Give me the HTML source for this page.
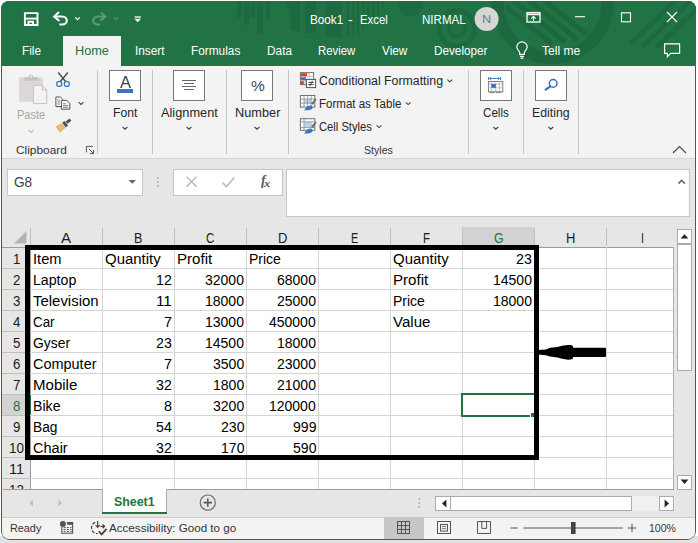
<!DOCTYPE html>
<html lang="en"><head><meta charset="utf-8"><title>Book1 - Excel</title>
<style>
html,body{margin:0;padding:0;}
body{width:698px;height:543px;overflow:hidden;background:#fff;position:relative;font-family:"Liberation Sans",sans-serif;}
.win{position:absolute;left:1px;top:1px;width:695px;height:539px;background:#217346;border-radius:8px 8px 9px 9px;overflow:hidden;}
.win *{position:absolute;}
.shadow{position:absolute;left:0;top:536px;width:698px;height:7px;background:#e2e2e2;}
.titlebg{left:0;top:0;width:695px;height:65px;background:#217346;}
.hometab{left:62px;top:35px;width:58px;height:30px;background:#f3f3f3;}
.ribbon{left:1px;top:65px;width:693px;height:92px;background:#f3f3f3;}
.below{left:1px;top:157px;width:693px;height:359px;background:#e6e6e6;}
.rline{left:1px;top:157px;width:693px;height:1px;background:#d4d4d4;}
.sep{width:1px;background:#c6c6c6;top:69px;height:84px;}
.bigbtn{width:30px;height:29px;top:69px;background:#fff;border:1px solid #787878;}
.box{background:#fff;border:1px solid #c6c6c6;box-sizing:border-box;}
.status{left:1px;top:516px;width:693px;height:22px;background:#f3f3f3;border-radius:0 0 7px 7px;border-top:1px solid #cdcdcd;box-sizing:border-box;}
.gridbg{left:30px;top:247px;width:643px;height:241px;background:#fff;}
.grid{position:absolute;left:0;top:0;width:698px;height:543px;overflow:hidden;pointer-events:none;}
.grid i{position:absolute;display:block;}
.vl{top:247px;width:1px;height:242px;background:#d4d4d4;}
.hl{left:30px;width:643px;height:1px;background:#d4d4d4;}
.hvl{top:228px;width:1px;height:18px;background:#c0c0c0;}
.hhl{left:2px;width:28px;height:1px;background:#c0c0c0;}
.texts{position:absolute;left:0;top:0;width:698px;height:543px;overflow:hidden;}
.t{position:absolute;white-space:pre;line-height:20px;height:20px;transform-origin:0 50%;display:block;}
svg{position:absolute;overflow:visible;}
.ov{position:absolute;}
</style></head><body>
<div class="shadow"></div>
<div class="win">
 <div class="titlebg"></div>
 <svg style="left:0;top:0" width="695" height="65" viewBox="1 1 695 65"><defs><clipPath id="ringclip"><circle cx="552.5" cy="3" r="47"/></clipPath></defs>
  <g fill="#1e6a40" stroke="none">
   <rect x="237" y="0" width="5" height="18"/><rect x="244" y="0" width="5" height="25"/><rect x="250.6" y="0" width="5" height="18"/>
   <rect x="257" y="0" width="6" height="33"/><rect x="266" y="0" width="4" height="20"/>
   <path d="M285 0 L290 12 L290 30 L300 33 L300 0 Z"/>
   <rect x="305" y="0" width="11" height="33"/>
   <rect x="325.5" y="0" width="16.5" height="37"/>
   <rect x="347" y="0" width="2.4" height="36"/><rect x="352" y="0" width="2.4" height="35"/><rect x="357" y="0" width="2.4" height="33"/><rect x="362" y="0" width="2.4" height="30"/><rect x="367" y="0" width="2.4" height="26"/><rect x="372" y="0" width="2" height="20"/><rect x="377" y="0" width="2" height="14"/><rect x="382" y="0" width="2" height="8"/>
   <circle cx="410.7" cy="4" r="12"/>
  </g>
  <g fill="none" stroke="#1e6a40">
   <circle cx="456.8" cy="28.4" r="8" stroke-width="4"/>
   <circle cx="456.8" cy="28.4" r="17.7" stroke-width="5"/>
   <circle cx="552.5" cy="3" r="55" stroke-width="12" stroke="#1d683e"/>
   <g clip-path="url(#ringclip)" stroke="#1d683e"><path d="M490 -6 L552 44 M503 -8 L565 42 M516 -10 L578 40 M529 -12 L591 38" stroke-width="5"/></g>
   <path d="M630 44 L676 0 M643 46 L691 0 M656 48 L704 2" stroke-width="5"/>
  </g>
 </svg>
 <div class="hometab"></div>
 <div class="ribbon"></div>
 <div class="below"></div>
 <div class="rline"></div>
 <!-- ribbon separators -->
 <div class="sep" style="left:96px"></div>
 <div class="sep" style="left:151px"></div>
 <div class="sep" style="left:225px"></div>
 <div class="sep" style="left:287px"></div>
 <div class="sep" style="left:467px"></div>
 <div class="sep" style="left:522px"></div>
 <div class="sep" style="left:577px"></div>
 <!-- big buttons -->
 <div class="bigbtn" style="left:108px"></div>
 <div class="bigbtn" style="left:172px"></div>
 <div class="bigbtn" style="left:240px"></div>
 <div class="bigbtn" style="left:479px"></div>
 <div class="bigbtn" style="left:534px"></div>
 <!-- formula bar -->
 <div class="box" style="left:6px;top:168px;width:136px;height:27px"></div>
 <div class="box" style="left:172px;top:168px;width:110px;height:27px"></div>
 <div class="box" style="left:285px;top:168px;width:404px;height:48px"></div>
 <!-- grid background + header area -->
 <div style="left:2px;top:225px;width:672px;height:22px;background:#e6e6e6"></div>
 <div style="left:461px;top:226px;width:72px;height:20px;background:#d2d2d2"></div>
 <div style="left:461px;top:245px;width:72px;height:2px;background:#217346"></div>
 <div style="left:1px;top:394px;width:28px;height:20px;background:#d2d2d2"></div>
  <div class="gridbg"></div>
 <div style="left:1px;top:246px;width:672px;height:1px;background:#9b9b9b"></div>
 <div style="left:29px;top:246px;width:1px;height:243px;background:#9b9b9b"></div>
 <div style="left:672px;top:246px;width:1px;height:243px;background:#b0b0b0"></div>
 <div style="left:2px;top:488px;width:671px;height:1px;background:#9b9b9b"></div>
 <div style="left:28px;top:394px;width:2px;height:20px;background:#217346"></div>
 <!-- vertical scrollbar -->
 <div class="box" style="left:676px;top:228px;width:15px;height:15px;border-color:#ababab"></div>
 <div class="box" style="left:676px;top:243px;width:15px;height:127px;border-color:#ababab"></div>
 <div class="box" style="left:676px;top:474px;width:15px;height:15px;border-color:#ababab"></div>
 <!-- sheet tab bar -->
 <div style="left:101px;top:488px;width:65px;height:24px;background:#fff;border-left:1px solid #ababab;border-right:1px solid #ababab;box-sizing:border-box"></div>
 <div style="left:101px;top:511px;width:65px;height:2px;background:#217346"></div>
 
 <!-- h scrollbar -->
 <div style="left:434px;top:495px;width:240px;height:15px;background:#f0f0f0"></div>
 <div class="box" style="left:434px;top:495px;width:16px;height:15px;border-color:#ababab"></div>
 <div class="box" style="left:449px;top:495px;width:182px;height:15px;border-color:#ababab"></div>
 <div class="box" style="left:658px;top:495px;width:15px;height:15px;border-color:#ababab"></div>
 <!-- status -->
 <div class="status"></div>
 <div style="left:383px;top:516px;width:40px;height:22px;background:#c6c6c6"></div>
</div>
<div class="grid">
<i class="vl" style="left:102px"></i>
<i class="vl" style="left:174px"></i>
<i class="vl" style="left:246px"></i>
<i class="vl" style="left:318px"></i>
<i class="vl" style="left:390px"></i>
<i class="vl" style="left:462px"></i>
<i class="vl" style="left:534px"></i>
<i class="vl" style="left:606px"></i>
<i class="hl" style="top:268px"></i>
<i class="hl" style="top:289px"></i>
<i class="hl" style="top:310px"></i>
<i class="hl" style="top:331px"></i>
<i class="hl" style="top:352px"></i>
<i class="hl" style="top:373px"></i>
<i class="hl" style="top:394px"></i>
<i class="hl" style="top:415px"></i>
<i class="hl" style="top:436px"></i>
<i class="hl" style="top:457px"></i>
<i class="hl" style="top:478px"></i>
<i class="hvl" style="left:30px"></i>
<i class="hvl" style="left:102px"></i>
<i class="hvl" style="left:174px"></i>
<i class="hvl" style="left:246px"></i>
<i class="hvl" style="left:318px"></i>
<i class="hvl" style="left:390px"></i>
<i class="hvl" style="left:462px"></i>
<i class="hvl" style="left:534px"></i>
<i class="hvl" style="left:606px"></i>
<i class="hhl" style="top:268px"></i>
<i class="hhl" style="top:289px"></i>
<i class="hhl" style="top:310px"></i>
<i class="hhl" style="top:331px"></i>
<i class="hhl" style="top:352px"></i>
<i class="hhl" style="top:373px"></i>
<i class="hhl" style="top:394px"></i>
<i class="hhl" style="top:415px"></i>
<i class="hhl" style="top:436px"></i>
<i class="hhl" style="top:457px"></i>
<i class="hhl" style="top:478px"></i>
</div>
<svg style="left:0;top:0" width="698" height="543" viewBox="0 0 698 543" fill="none">
 <!-- QAT: save -->
 <g stroke="#fff" stroke-width="1.9">
  <path d="M24.9 13.1 H37.5 V25 H24.9 Z"/>
  <path d="M24.8 18.6 H37.6"/>
  <path d="M28.4 25.2 V21.8 H33 V25.2"/>
 </g>
 <!-- undo -->
 <g stroke="#fff" stroke-width="2" stroke-linecap="butt">
  <path d="M59 12 L54.2 16.6 L59.4 21"/>
  <path d="M54.8 16.6 H62 C68.4 16.6 68.4 24.6 62 24.6 H59.4"/>
 </g>
 <path d="M75.2 17.4 L77.5 19.6 L79.8 17.4" stroke="#fff" stroke-width="1.2"/>
 <!-- redo (dim) -->
 <g stroke="#5c9a78" stroke-width="2">
  <path d="M101 12.4 L105.4 16.6 L100.4 20.6"/>
  <path d="M104.8 16.6 H98 C91.6 16.6 91.6 24.6 98 24.6 H100.2"/>
 </g>
 <path d="M114 17.4 L116.3 19.6 L118.6 17.4" stroke="#5c9a78" stroke-width="1.2"/>
 <!-- customize -->
 <path d="M134.6 17 H140.8" stroke="#fff" stroke-width="1.3"/>
 <path d="M134.4 18.8 H141 L137.7 22.2 Z" fill="#fff"/>
 <!-- avatar -->
 <circle cx="486.6" cy="19" r="12" fill="#d6d6d6"/>
 <!-- ribbon display -->
 <g stroke="#fff" stroke-width="1.1">
  <rect x="527" y="12.6" width="13" height="9.4" stroke-width="1.3"/>
  <path d="M527 14.4 H540" stroke-width="1.6"/>
  <path d="M533.5 21 V16.6 M531.3 18.6 L533.5 16.4 L535.7 18.6"/>
 </g>
 <!-- min / max / close -->
 <path d="M575 16.7 H585" stroke="#fff" stroke-width="1.1"/>
 <rect x="621.5" y="12.8" width="9" height="9" stroke="#fff" stroke-width="1.1"/>
 <path d="M667 12 L677 22 M677 12 L667 22" stroke="#fff" stroke-width="1.1"/>
 <!-- lightbulb -->
 <g stroke="#fff" stroke-width="1.2">
  <path d="M519.6 54.4 V52.6 C519.6 50.6 516.8 49.8 516.8 47 A5.2 5.2 0 0 1 527.2 47 C527.2 49.8 524.4 50.6 524.4 52.6 V54.4 Z"/>
  <path d="M520 56.4 H524 M520.6 58.2 H523.4"/>
 </g>
 <!-- comment -->
 <path d="M664.6 43.8 H679.6 V53.4 H670.6 L667.4 56.8 V53.4 H664.6 Z" stroke="#fff" stroke-width="1.2"/>

 <!-- Paste icon (disabled) -->
 <rect x="19" y="77.3" width="24" height="24.5" rx="1.5" fill="#dcd7db"/>
 <path d="M24.4 80.8 V77.2 H28.6 A2.4 2.4 0 0 1 33.4 77.2 H37.7 V80.8 Z" fill="#c6c1c5"/>
 <circle cx="31" cy="76.6" r="1" fill="#f3f3f3"/>
 <path d="M33.4 85.4 H42.4 L46.7 89.8 V103.6 H33.4 Z" fill="#f6f1f5" stroke="#c6c1c5" stroke-width="1"/>
 <path d="M42.4 85.4 V89.8 H46.7" stroke="#c6c1c5" stroke-width="1"/>
 <path d="M28.4 130.2 L31 132.4 L33.6 130.2" stroke="#b4b4b4" stroke-width="1.1"/>
 <!-- scissors -->
 <g stroke="#505050" stroke-width="1.5">
  <path d="M58.2 72.6 L66 82 M67.8 72.6 L60 82"/>
 </g>
 <circle cx="59.2" cy="83.9" r="2.5" stroke="#3b78c3" stroke-width="1.3"/>
 <circle cx="66.8" cy="83.9" r="2.5" stroke="#3b78c3" stroke-width="1.3"/>
 <!-- copy -->
 <g stroke="#505050" stroke-width="1" fill="#fff">
  <path d="M55.9 97 H60.4 L62.6 99.2 V106.6 H55.9 Z"/>
  <path d="M61.4 100.4 H66.6 L69.8 103.4 V109.2 H61.4 Z"/>
 </g>
 <path d="M57.4 100 H60 M57.4 102 H60 M57.4 104 H60 M63 103.8 H66 M63 105.6 H68.2 M63 107.4 H68.2" stroke="#3b78c3" stroke-width="0.9"/>
 <path d="M78.7 102.2 L81.1 104.4 L83.5 102.2" stroke="#444" stroke-width="1.1"/>
 <!-- format painter -->
 <path d="M55.4 126.4 L62 123 L65.6 127.8 L60 132.8 Z" fill="#e9b96e"/>
 <path d="M62.2 122.6 L64.6 121 L68 125.4 L65.8 127.4 Z" fill="#505050"/>
 <path d="M65.6 121.4 L69.6 118.6 L71.4 120.8 L67.6 123.8 Z" fill="#505050"/>
 <!-- dialog launcher -->
 <path d="M86.4 152.4 V146.4 H93 M89 149 L93.4 153.4 M93.6 150 V153.6 H90" stroke="#555" stroke-width="1"/>

 <!-- Font A -->
  <rect x="117" y="89" width="16" height="4" fill="#3d73b7"/>
 <!-- Alignment -->
 <path d="M182 80.5 H196 M184 83.5 H194 M182 86.5 H196 M184 89.5 H194" stroke="#666" stroke-width="1"/>
 <!-- chevrons for big buttons -->
 <g stroke="#444" stroke-width="1.1">
  <path d="M122.6 127 L125 129.2 L127.4 127"/>
  <path d="M186.6 127 L189 129.2 L191.4 127"/>
  <path d="M254.6 127 L257 129.2 L259.4 127"/>
  <path d="M493.4 127 L495.8 129.2 L498.2 127"/>
  <path d="M548.4 127 L550.8 129.2 L553.2 127"/>
  <path d="M447.4 79.6 L449.8 81.8 L452.2 79.6"/>
  <path d="M405.8 102.4 L408.2 104.6 L410.6 102.4"/>
  <path d="M376.6 125.4 L379 127.6 L381.4 125.4"/>
 </g>
 <!-- conditional formatting icon -->
 <g>
  <rect x="300.4" y="72.6" width="13.2" height="12" fill="#fff" stroke="#6e6e6e" stroke-width="1"/>
  <path d="M300.4 76.6 H313.6 M300.4 80.6 H313.6 M304.8 72.6 V84.6 M309.2 72.6 V84.6" stroke="#b8b8b8" stroke-width="0.8"/>
  <rect x="300.9" y="73.2" width="6.2" height="3" fill="#d24726"/>
  <rect x="300.9" y="77.2" width="5" height="3" fill="#4472c4"/>
  <rect x="300.9" y="81.2" width="3" height="3" fill="#d24726"/>
  <rect x="306.4" y="79.4" width="9.2" height="8.2" fill="#fff" stroke="#505050" stroke-width="1"/>
  <path d="M308.4 82.4 H313.6 M308.4 84.6 H313.6 M312.6 80.8 L309.6 86.2" stroke="#333" stroke-width="0.9"/>
 </g>
 <!-- format as table icon -->
 <g>
  <rect x="300.4" y="95.5" width="14.4" height="11.6" fill="#fff" stroke="#6e6e6e" stroke-width="1"/>
  <rect x="304.2" y="99.2" width="6.8" height="4" fill="#bcd3ec"/>
  <path d="M300.4 99 H314.8 M300.4 103.2 H314.8 M304 95.5 V107.1 M307.6 95.5 V107.1 M311.2 95.5 V107.1" stroke="#8c8c8c" stroke-width="0.8"/>
  <path d="M311 103.4 L315.4 98.2 L316.6 99.4 L313 105 Z" fill="#707070"/>
  <path d="M304.2 110.6 C305.4 107.6 307.4 105.2 310.6 105.4 C313 105.6 313.4 108.6 311 109.6 C309 110.4 306 110.2 304.2 110.6 Z" fill="#3a78c3"/>
 </g>
 <!-- cell styles icon -->
 <g>
  <rect x="300.4" y="118.7" width="14.4" height="11.6" fill="#fff" stroke="#6e6e6e" stroke-width="1"/>
  <rect x="304.2" y="122" width="8" height="5.6" fill="#bcd3ec"/>
  <path d="M300.4 121.8 H314.8 M300.4 127.6 H314.8 M304 118.7 V130.3" stroke="#8c8c8c" stroke-width="0.8"/>
  <path d="M311 126.6 L315.4 121.4 L316.6 122.6 L313 128.2 Z" fill="#707070"/>
  <path d="M304.2 133.8 C305.4 130.8 307.4 128.4 310.6 128.6 C313 128.8 313.4 131.8 311 132.8 C309 133.6 306 133.4 304.2 133.8 Z" fill="#3a78c3"/>
 </g>
 <!-- Cells icon -->
 <g>
  <rect x="488.4" y="81.4" width="14.4" height="10.4" fill="#fff" stroke="#6e6e6e" stroke-width="0.9"/>
  <path d="M488.4 84 H502.8 M488.4 87.8 H502.8 M491.4 81.4 V91.8 M495.8 81.4 V91.8 M499.4 81.4 V91.8" stroke="#a8a8a8" stroke-width="0.7"/>
  <rect x="491.4" y="84" width="4.4" height="3.8" fill="#3a6fb5"/>
  <path d="M488.6 77 V80 M500.6 77 V80 M489.6 78.5 H499.6 M491.2 77.2 L489.8 78.5 L491.2 79.8 M498 77.2 L499.4 78.5 L498 79.8" stroke="#3a6fb5" stroke-width="0.9"/>
  <path d="M489.6 92.6 H494.6 M496 92.6 H501.4" stroke="#6e6e6e" stroke-width="0.8"/>
 </g>
 <!-- Editing icon -->
 <circle cx="553.2" cy="83.4" r="3.8" stroke="#3a6fb5" stroke-width="1.5" fill="#fff"/>
 <path d="M550.4 86.4 L545 90.2" stroke="#3a6fb5" stroke-width="2.2"/>
 <!-- collapse ribbon caret -->
 <path d="M673 153 L679.5 146.6 L686 153" stroke="#444" stroke-width="1.1"/>

 <!-- name box dropdown -->
 <path d="M128.6 180 H136 L132.3 183.8 Z" fill="#666"/>
 <!-- dots -->
 <g fill="#a6a6a6">
  <rect x="157" y="177" width="1.6" height="1.6"/><rect x="157" y="181" width="1.6" height="1.6"/><rect x="157" y="185" width="1.6" height="1.6"/>
  <rect x="418.4" y="498.2" width="1.6" height="1.6"/><rect x="418.4" y="502.2" width="1.6" height="1.6"/><rect x="418.4" y="506.2" width="1.6" height="1.6"/>
 </g>
 <!-- formula bar x and check -->
 <path d="M186.6 176.6 L196.6 186.8 M196.6 176.6 L186.6 186.8" stroke="#b4b4b4" stroke-width="1.3"/>
 <path d="M222.4 182.6 L226.4 186.6 L234.4 177.4" stroke="#c0c0c0" stroke-width="1.8"/>
 <!-- formula expand caret -->
 <path d="M678.4 183.6 L681.6 180.4 L684.8 183.6" stroke="#666" stroke-width="1.5"/>
 <!-- select all triangle -->
 <path d="M26.4 231 V243.4 H14 Z" fill="#b4b4b4"/>
 <!-- scrollbar arrows -->
 <path d="M680.6 238.6 H688.4 L684.5 234.2 Z" fill="#222"/>
 <path d="M680.6 479.6 H688.4 L684.5 484 Z" fill="#222"/>
 <path d="M446.4 499.4 V507.4 L442 503.4 Z" fill="#222"/>
 <path d="M664.6 499.4 V507.4 L669 503.4 Z" fill="#222"/>
 <!-- sheet nav arrows -->
 <path d="M33 499.4 V506.4 L29.4 502.9 Z" fill="#c0c0c0"/>
 <path d="M58.4 499.4 V506.4 L62 502.9 Z" fill="#c0c0c0"/>
 <!-- new sheet plus -->
 <circle cx="207.8" cy="502.6" r="7.6" stroke="#6e6e6e" stroke-width="1.2"/>
 <path d="M203.6 502.6 H212 M207.8 498.4 V506.8" stroke="#5a5a5a" stroke-width="1.6"/>
 <!-- status icons -->
 <g>
  <path d="M61.8 527 V533.2 H72.6 V522.6 H66.8" stroke="#555" stroke-width="1.1"/>
  <rect x="67.2" y="522.2" width="5.9" height="2.6" fill="#555"/>
  <circle cx="62.9" cy="523.9" r="3" fill="#555"/>
  <path d="M63.6 527.6 H65.6 M66.8 527.6 H68.8 M70 527.6 H71.6 M63.6 529.6 H65.6 M66.8 529.6 H68.8 M70 529.6 H71.6 M63.6 531.6 H65.6 M66.8 531.6 H68.8 M70 531.6 H71.6" stroke="#555" stroke-width="1"/>
 </g>
 <g stroke="#444" stroke-width="1.2">
  <path d="M95.2 522.4 A5.8 5.8 0 0 0 97.6 533.6" stroke-dasharray="3.2 1.6"/>
  <path d="M97.7 521 V527.2 M95.6 525.2 L97.7 527.4 L99.8 525.2"/>
  <path d="M100.6 526.3 H104.4 M102.6 524.4 L104.6 526.3 L102.6 528.2"/>
  <path d="M98.8 531.4 L101.6 534.4 L106.6 528.8" stroke-width="1.8"/>
 </g>
 <!-- view buttons -->
 <g stroke="#555" stroke-width="1">
  <rect x="397.5" y="521.5" width="12" height="12"/>
  <path d="M401.5 521.5 V533.5 M405.5 521.5 V533.5 M397.5 525.5 H409.5 M397.5 529.5 H409.5"/>
  <rect x="437.5" y="521.5" width="13" height="12"/>
  <rect x="440.5" y="524.5" width="7" height="6.6"/>
  <path d="M442 526.5 H446 M442 528.7 H446" stroke-width="0.8"/>
  <path d="M477.5 521.5 H490.5 V533.5 H477.5 Z"/>
  <path d="M481.8 521.5 V528.4 H486.6 V521.5"/>
 </g>
 <!-- zoom slider -->
 <path d="M510.4 528 H517.8 M523.4 528 H622.8 M627.8 528 H636.2 M632 523.8 V532.2" stroke="#555" stroke-width="1"/>
 <rect x="571" y="522" width="4.6" height="12" fill="#444"/>
</svg>
<!-- selection, black rectangle, arrow -->
<div class="ov" style="left:461px;top:393px;width:71px;height:20px;border:2px solid #217346"></div>
<div class="ov" style="left:530px;top:412px;width:6px;height:6px;background:#217346;border:1px solid #fff;box-sizing:border-box"></div>
<div class="ov" style="left:25px;top:245px;width:504px;height:205px;border:5px solid #000"></div>
<svg style="left:0;top:0" width="698" height="543" viewBox="0 0 698 543">
 <path d="M538 350 L546 349.6 L550 347.8 L557.5 346.9 L562 345.7 L568 345 L571 345 L573 346 L573 347.8 L605 347.8 Q606 347.8 606 349 L606 356 Q606 356.9 605 356.9 L573 356.9 L573 358.6 L571 359.6 L568 359.7 L562 358.7 L557.5 357.5 L550 356.6 L546 355.2 L538 354.6 Z" fill="#000"/>
</svg>
<div class="texts">
<span class="t" id="t0" style='left:309.60px;top:9.67px;font-size:12.5px;color:#fff;transform:scaleX(0.9364);'>Book1</span>
<span class="t" id="t1" style='left:348.10px;top:9.67px;font-size:12.5px;color:#fff;transform:scaleX(1.1506);'>-</span>
<span class="t" id="t2" style='left:359.60px;top:9.67px;font-size:12.5px;color:#fff;transform:scaleX(0.9091);'>Excel</span>
<span class="t" id="t3" style='left:422.20px;top:9.67px;font-size:12.5px;color:#fff;transform:scaleX(0.9252);'>NIRMAL</span>
<span class="t" id="t4" style='left:482.00px;top:9.32px;font-size:11.5px;color:#77778a;transform:scaleX(1.1068);'>N</span>
<span class="t" id="t5" style='left:21.60px;top:40.77px;font-size:12.5px;color:#fff;transform:scaleX(0.9426);'>File</span>
<span class="t" id="t6" style='left:74.80px;top:40.77px;font-size:12.5px;color:#217346;transform:scaleX(1.0167);'>Home</span>
<span class="t" id="t7" style='left:135.00px;top:40.77px;font-size:12.5px;color:#fff;transform:scaleX(0.9467);'>Insert</span>
<span class="t" id="t8" style='left:190.60px;top:40.77px;font-size:12.5px;color:#fff;transform:scaleX(0.9464);'>Formulas</span>
<span class="t" id="t9" style='left:266.60px;top:40.77px;font-size:12.5px;color:#fff;transform:scaleX(0.9467);'>Data</span>
<span class="t" id="t10" style='left:318.00px;top:40.77px;font-size:12.5px;color:#fff;transform:scaleX(0.9073);'>Review</span>
<span class="t" id="t11" style='left:381.90px;top:40.77px;font-size:12.5px;color:#fff;transform:scaleX(0.9414);'>View</span>
<span class="t" id="t12" style='left:433.90px;top:40.77px;font-size:12.5px;color:#fff;transform:scaleX(0.9389);'>Developer</span>
<span class="t" id="t13" style='left:542.10px;top:40.77px;font-size:12.5px;color:#fff;transform:scaleX(0.9673);'>Tell me</span>
<span class="t" id="t14" style='left:17.40px;top:105.14px;font-size:12px;color:#a6a6a6;transform:scaleX(0.9157);'>Paste</span>
<span class="t" id="t15" style='left:15.90px;top:140.12px;font-size:11.2px;color:#333;transform:scaleX(1.0628);'>Clipboard</span>
<span class="t" id="t16" style='left:113.10px;top:102.67px;font-size:12.5px;color:#262626;transform:scaleX(0.9714);'>Font</span>
<span class="t" id="t17" style='left:160.60px;top:102.67px;font-size:12.5px;color:#262626;transform:scaleX(1.0217);'>Alignment</span>
<span class="t" id="t18" style='left:234.60px;top:102.67px;font-size:12.5px;color:#262626;transform:scaleX(1.0209);'>Number</span>
<span class="t" id="t19" style='left:319.00px;top:71.17px;font-size:12.5px;color:#262626;transform:scaleX(0.9860);'>Conditional Formatting</span>
<span class="t" id="t20" style='left:319.00px;top:93.67px;font-size:12.5px;color:#262626;transform:scaleX(0.9216);'>Format as Table</span>
<span class="t" id="t21" style='left:319.00px;top:116.67px;font-size:12.5px;color:#262626;transform:scaleX(0.8959);'>Cell Styles</span>
<span class="t" id="t22" style='left:364.00px;top:140.12px;font-size:11.2px;color:#333;transform:scaleX(0.9452);'>Styles</span>
<span class="t" id="t23" style='left:250.60px;top:76.15px;font-size:14px;color:#444;transform:scaleX(1.1082);'>%</span>
<span class="t" id="t24" style='left:119.70px;top:72.59px;font-size:15.6px;color:#444;transform:scaleX(1.0571);'>A</span>
<span class="t" id="t25" style='left:482.60px;top:102.67px;font-size:12.5px;color:#262626;transform:scaleX(0.9282);'>Cells</span>
<span class="t" id="t26" style='left:531.60px;top:102.67px;font-size:12.5px;color:#262626;transform:scaleX(0.9834);'>Editing</span>
<span class="t" id="t27" style='left:13.90px;top:173.02px;font-size:13.8px;color:#444;transform:scaleX(0.9888);'>G8</span>
<span class="t" id="t28" style='left:260.80px;top:171.15px;font-size:14px;color:#5a5a5a;font-weight:bold;font-style:italic;font-family:"Liberation Serif", serif;transform:scaleX(0.9846);'>f</span>
<span class="t" id="t29" style='left:264.20px;top:173.53px;font-size:10px;color:#5a5a5a;font-weight:bold;font-style:italic;font-family:"Liberation Serif", serif;transform:scaleX(1.2400);'>x</span>
<span class="t" id="t30" style='left:10.20px;top:518.06px;font-size:10.8px;color:#333;transform:scaleX(1.0026);'>Ready</span>
<span class="t" id="t31" style='left:108.60px;top:518.06px;font-size:10.8px;color:#333;transform:scaleX(1.0758);'>Accessibility: Good to go</span>
<span class="t" id="t32" style='left:649.40px;top:518.06px;font-size:10.8px;color:#333;transform:scaleX(0.9774);'>100%</span>
<span class="t" id="t33" style='left:113.80px;top:492.03px;font-size:13.2px;color:#217346;font-weight:bold;transform:scaleX(0.9387);'>Sheet1</span>
<span class="t" id="t34" style='left:61.45px;top:228.15px;font-size:14px;color:#1c1c1c;transform:scaleX(1.0809);'>A</span>
<span class="t" id="t35" style='left:134.30px;top:228.15px;font-size:14px;color:#1c1c1c;transform:scaleX(0.8990);'>B</span>
<span class="t" id="t36" style='left:206.30px;top:228.15px;font-size:14px;color:#1c1c1c;transform:scaleX(0.8296);'>C</span>
<span class="t" id="t37" style='left:277.80px;top:228.15px;font-size:14px;color:#1c1c1c;transform:scaleX(0.9284);'>D</span>
<span class="t" id="t38" style='left:350.90px;top:228.15px;font-size:14px;color:#1c1c1c;transform:scaleX(0.7706);'>E</span>
<span class="t" id="t39" style='left:423.00px;top:228.15px;font-size:14px;color:#1c1c1c;transform:scaleX(0.8175);'>F</span>
<span class="t" id="t40" style='left:493.70px;top:228.15px;font-size:14px;color:#217346;transform:scaleX(0.8815);'>G</span>
<span class="t" id="t41" style='left:565.80px;top:228.15px;font-size:14px;color:#1c1c1c;transform:scaleX(0.9284);'>H</span>
<span class="t" id="t42" style='left:641.30px;top:228.15px;font-size:14px;color:#1c1c1c;transform:scaleX(0.7711);'>I</span>
<span class="t" id="t43" style='left:12.50px;top:249.15px;font-size:14px;color:#1c1c1c;transform:scaleX(0.9491);'>1</span>
<span class="t" id="t44" style='left:12.50px;top:270.15px;font-size:14px;color:#1c1c1c;transform:scaleX(0.9491);'>2</span>
<span class="t" id="t45" style='left:12.50px;top:291.15px;font-size:14px;color:#1c1c1c;transform:scaleX(0.9491);'>3</span>
<span class="t" id="t46" style='left:12.50px;top:312.15px;font-size:14px;color:#1c1c1c;transform:scaleX(0.9491);'>4</span>
<span class="t" id="t47" style='left:12.50px;top:333.15px;font-size:14px;color:#1c1c1c;transform:scaleX(0.9491);'>5</span>
<span class="t" id="t48" style='left:12.50px;top:354.15px;font-size:14px;color:#1c1c1c;transform:scaleX(0.9491);'>6</span>
<span class="t" id="t49" style='left:12.50px;top:375.15px;font-size:14px;color:#1c1c1c;transform:scaleX(0.9491);'>7</span>
<span class="t" id="t50" style='left:12.50px;top:396.15px;font-size:14px;color:#217346;transform:scaleX(0.9491);'>8</span>
<span class="t" id="t51" style='left:12.50px;top:417.15px;font-size:14px;color:#1c1c1c;transform:scaleX(0.9491);'>9</span>
<span class="t" id="t52" style='left:8.60px;top:438.15px;font-size:14px;color:#1c1c1c;transform:scaleX(0.9629);'>10</span>
<span class="t" id="t53" style='left:8.60px;top:459.15px;font-size:14px;color:#1c1c1c;transform:scaleX(1.0311);'>11</span>
<span class="t" id="t54" style='left:8.60px;top:480.15px;font-size:14px;color:#1c1c1c;clip-path:inset(0 0 11.15px 0);transform:scaleX(0.9629);'>12</span>
<span class="t" id="t55" style='left:33.10px;top:249.15px;font-size:14px;color:#000;transform:scaleX(1.0465);'>Item</span>
<span class="t" id="t56" style='left:105.10px;top:249.15px;font-size:14px;color:#000;transform:scaleX(1.0683);'>Quantity</span>
<span class="t" id="t57" style='left:177.10px;top:249.15px;font-size:14px;color:#000;transform:scaleX(1.0799);'>Profit</span>
<span class="t" id="t58" style='left:249.10px;top:249.15px;font-size:14px;color:#000;transform:scaleX(0.9998);'>Price</span>
<span class="t" id="t59" style='left:33.10px;top:270.15px;font-size:14px;color:#000;transform:scaleX(1.0110);'>Laptop</span>
<span class="t" id="t60" style='left:156.29px;top:270.15px;font-size:14px;color:#000;transform:scaleX(1.0117);'>12</span>
<span class="t" id="t61" style='left:205.10px;top:270.15px;font-size:14px;color:#000;transform:scaleX(1.0003);'>32000</span>
<span class="t" id="t62" style='left:277.10px;top:270.15px;font-size:14px;color:#000;transform:scaleX(1.0003);'>68000</span>
<span class="t" id="t63" style='left:33.10px;top:291.15px;font-size:14px;color:#000;transform:scaleX(1.0669);'>Television</span>
<span class="t" id="t64" style='left:156.29px;top:291.15px;font-size:14px;color:#000;transform:scaleX(1.0834);'>11</span>
<span class="t" id="t65" style='left:205.10px;top:291.15px;font-size:14px;color:#000;transform:scaleX(1.0003);'>18000</span>
<span class="t" id="t66" style='left:277.10px;top:291.15px;font-size:14px;color:#000;transform:scaleX(1.0003);'>25000</span>
<span class="t" id="t67" style='left:33.10px;top:312.15px;font-size:14px;color:#000;transform:scaleX(0.9529);'>Car</span>
<span class="t" id="t68" style='left:164.02px;top:312.15px;font-size:14px;color:#000;transform:scaleX(1.0299);'>7</span>
<span class="t" id="t69" style='left:205.10px;top:312.15px;font-size:14px;color:#000;transform:scaleX(1.0003);'>13000</span>
<span class="t" id="t70" style='left:269.37px;top:312.15px;font-size:14px;color:#000;transform:scaleX(0.9992);'>450000</span>
<span class="t" id="t71" style='left:33.10px;top:333.15px;font-size:14px;color:#000;transform:scaleX(0.9908);'>Gyser</span>
<span class="t" id="t72" style='left:156.29px;top:333.15px;font-size:14px;color:#000;transform:scaleX(1.0117);'>23</span>
<span class="t" id="t73" style='left:205.10px;top:333.15px;font-size:14px;color:#000;transform:scaleX(1.0003);'>14500</span>
<span class="t" id="t74" style='left:277.10px;top:333.15px;font-size:14px;color:#000;transform:scaleX(1.0003);'>18000</span>
<span class="t" id="t75" style='left:33.10px;top:354.15px;font-size:14px;color:#000;transform:scaleX(1.0330);'>Computer</span>
<span class="t" id="t76" style='left:164.02px;top:354.15px;font-size:14px;color:#000;transform:scaleX(1.0299);'>7</span>
<span class="t" id="t77" style='left:212.83px;top:354.15px;font-size:14px;color:#000;transform:scaleX(1.0020);'>3500</span>
<span class="t" id="t78" style='left:277.10px;top:354.15px;font-size:14px;color:#000;transform:scaleX(1.0003);'>23000</span>
<span class="t" id="t79" style='left:33.10px;top:375.15px;font-size:14px;color:#000;transform:scaleX(1.0739);'>Mobile</span>
<span class="t" id="t80" style='left:156.29px;top:375.15px;font-size:14px;color:#000;transform:scaleX(1.0117);'>32</span>
<span class="t" id="t81" style='left:212.83px;top:375.15px;font-size:14px;color:#000;transform:scaleX(1.0020);'>1800</span>
<span class="t" id="t82" style='left:277.10px;top:375.15px;font-size:14px;color:#000;transform:scaleX(1.0003);'>21000</span>
<span class="t" id="t83" style='left:33.10px;top:396.15px;font-size:14px;color:#000;transform:scaleX(1.0098);'>Bike</span>
<span class="t" id="t84" style='left:164.02px;top:396.15px;font-size:14px;color:#000;transform:scaleX(1.0299);'>8</span>
<span class="t" id="t85" style='left:212.83px;top:396.15px;font-size:14px;color:#000;transform:scaleX(1.0020);'>3200</span>
<span class="t" id="t86" style='left:269.37px;top:396.15px;font-size:14px;color:#000;transform:scaleX(0.9992);'>120000</span>
<span class="t" id="t87" style='left:33.10px;top:417.15px;font-size:14px;color:#000;transform:scaleX(0.9791);'>Bag</span>
<span class="t" id="t88" style='left:156.29px;top:417.15px;font-size:14px;color:#000;transform:scaleX(1.0117);'>54</span>
<span class="t" id="t89" style='left:220.56px;top:417.15px;font-size:14px;color:#000;transform:scaleX(1.0056);'>230</span>
<span class="t" id="t90" style='left:292.56px;top:417.15px;font-size:14px;color:#000;transform:scaleX(1.0056);'>999</span>
<span class="t" id="t91" style='left:33.10px;top:438.15px;font-size:14px;color:#000;transform:scaleX(1.0368);'>Chair</span>
<span class="t" id="t92" style='left:156.29px;top:438.15px;font-size:14px;color:#000;transform:scaleX(1.0117);'>32</span>
<span class="t" id="t93" style='left:220.56px;top:438.15px;font-size:14px;color:#000;transform:scaleX(1.0056);'>170</span>
<span class="t" id="t94" style='left:292.56px;top:438.15px;font-size:14px;color:#000;transform:scaleX(1.0056);'>590</span>
<span class="t" id="t95" style='left:392.80px;top:249.15px;font-size:14px;color:#000;transform:scaleX(1.0683);'>Quantity</span>
<span class="t" id="t96" style='left:516.29px;top:249.15px;font-size:14px;color:#000;transform:scaleX(1.0117);'>23</span>
<span class="t" id="t97" style='left:392.80px;top:270.15px;font-size:14px;color:#000;transform:scaleX(1.0799);'>Profit</span>
<span class="t" id="t98" style='left:493.10px;top:270.15px;font-size:14px;color:#000;transform:scaleX(1.0003);'>14500</span>
<span class="t" id="t99" style='left:392.80px;top:291.15px;font-size:14px;color:#000;transform:scaleX(0.9998);'>Price</span>
<span class="t" id="t100" style='left:493.10px;top:291.15px;font-size:14px;color:#000;transform:scaleX(1.0003);'>18000</span>
<span class="t" id="t101" style='left:392.80px;top:312.15px;font-size:14px;color:#000;transform:scaleX(1.0753);'>Value</span>
</div>
</body></html>
